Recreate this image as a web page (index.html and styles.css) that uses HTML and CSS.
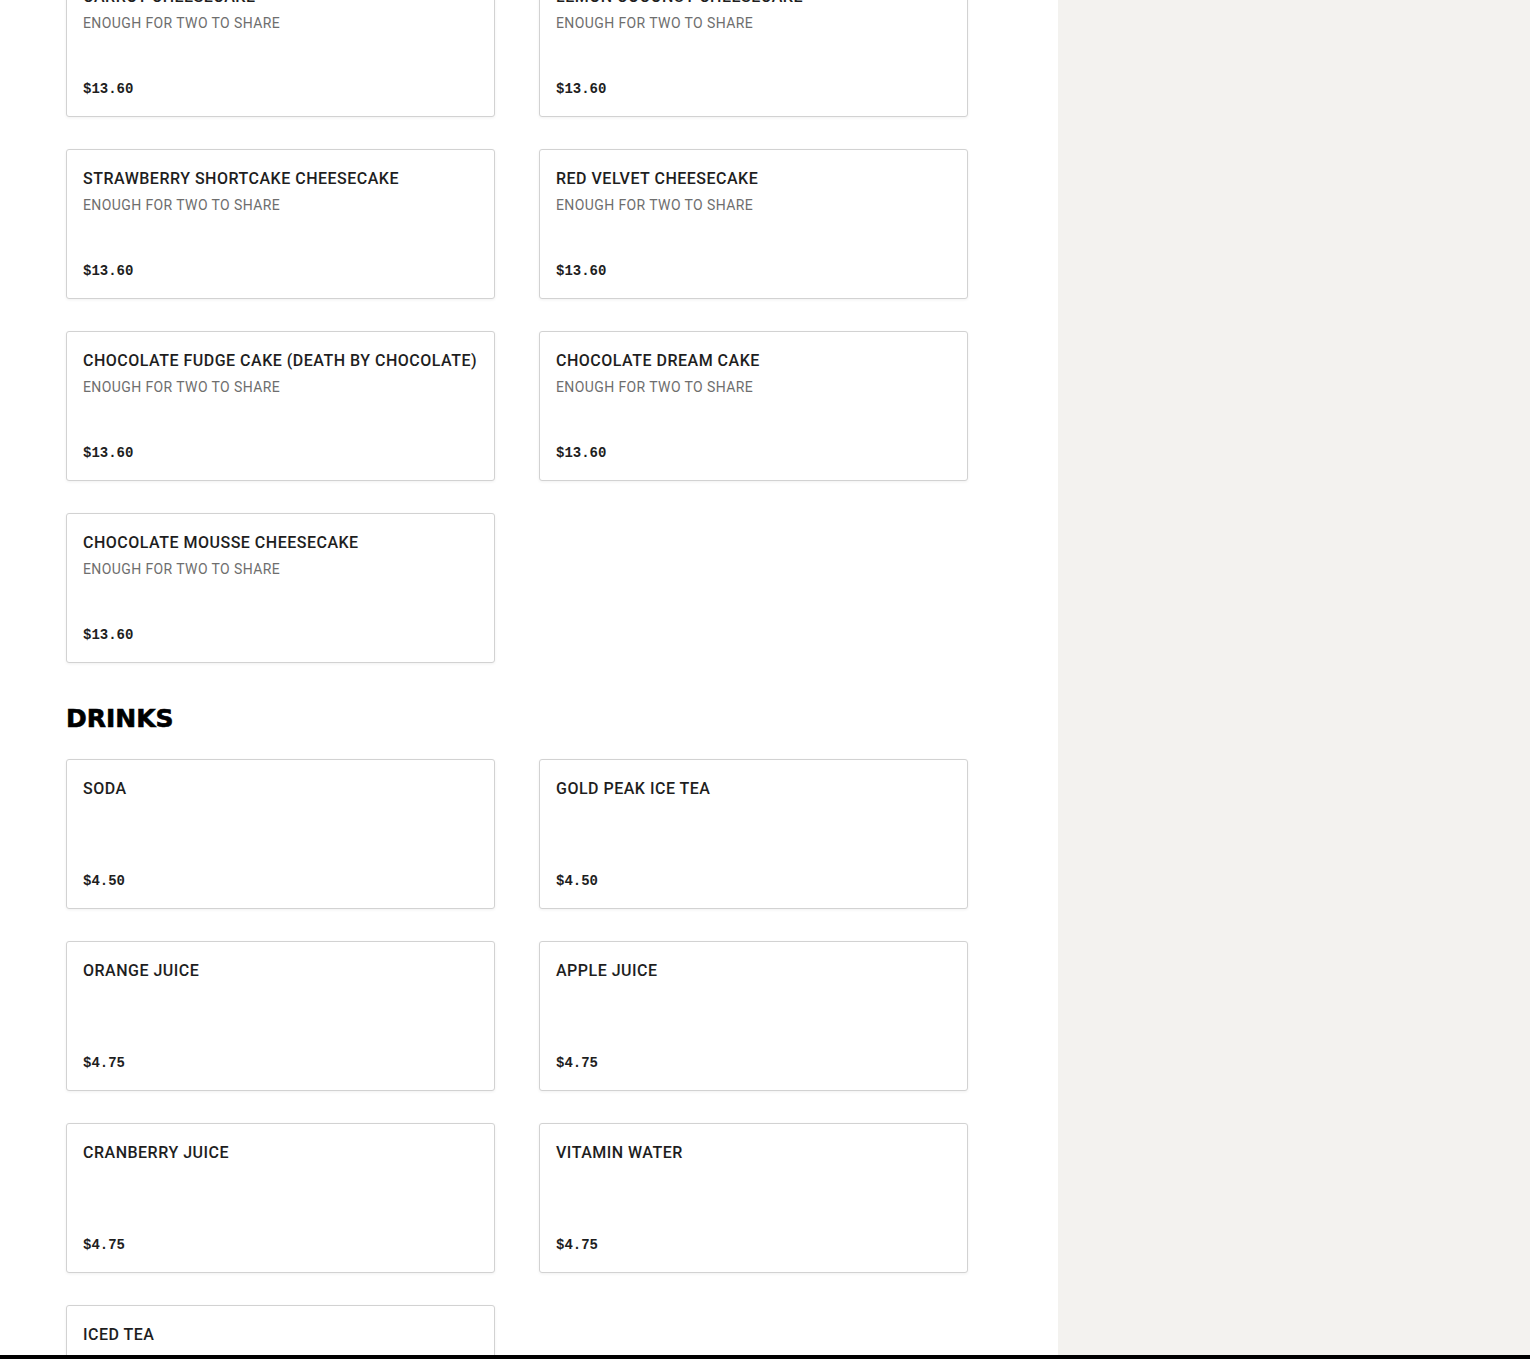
FILE: index.html
```html
<!DOCTYPE html>
<html lang="en">
<head>
<meta charset="utf-8">
<title>Menu</title>
<link rel="stylesheet" href="styles.css">
</head>
<body>
<div class="page">
  <main class="menu">
    <section class="section first">
      <div class="grid">
        <div class="card"><div class="name">CARROT CHEESECAKE</div><div class="desc">ENOUGH FOR TWO TO SHARE</div><div class="price">$13.60</div></div>
        <div class="card"><div class="name">LEMON COCONUT CHEESECAKE</div><div class="desc">ENOUGH FOR TWO TO SHARE</div><div class="price">$13.60</div></div>
        <div class="card"><div class="name">STRAWBERRY SHORTCAKE CHEESECAKE</div><div class="desc">ENOUGH FOR TWO TO SHARE</div><div class="price">$13.60</div></div>
        <div class="card"><div class="name">RED VELVET CHEESECAKE</div><div class="desc">ENOUGH FOR TWO TO SHARE</div><div class="price">$13.60</div></div>
        <div class="card"><div class="name">CHOCOLATE FUDGE CAKE (DEATH BY CHOCOLATE)</div><div class="desc">ENOUGH FOR TWO TO SHARE</div><div class="price">$13.60</div></div>
        <div class="card"><div class="name">CHOCOLATE DREAM CAKE</div><div class="desc">ENOUGH FOR TWO TO SHARE</div><div class="price">$13.60</div></div>
        <div class="card"><div class="name">CHOCOLATE MOUSSE CHEESECAKE</div><div class="desc">ENOUGH FOR TWO TO SHARE</div><div class="price">$13.60</div></div>
      </div>
    </section>
    <section class="section">
      <h2 class="heading">DRINKS</h2>
      <div class="grid">
        <div class="card"><div class="name">SODA</div><div class="price">$4.50</div></div>
        <div class="card"><div class="name">GOLD PEAK ICE TEA</div><div class="price">$4.50</div></div>
        <div class="card"><div class="name">ORANGE JUICE</div><div class="price">$4.75</div></div>
        <div class="card"><div class="name">APPLE JUICE</div><div class="price">$4.75</div></div>
        <div class="card"><div class="name">CRANBERRY JUICE</div><div class="price">$4.75</div></div>
        <div class="card"><div class="name">VITAMIN WATER</div><div class="price">$4.75</div></div>
        <div class="card"><div class="name">ICED TEA</div><div class="price">$4.75</div></div>
      </div>
    </section>
  </main>
  <aside class="side"></aside>
</div>
<div class="bottom-bar"></div>
</body>
</html>
```
FILE: styles.css
```css
html, body {
  margin: 0;
  padding: 0;
  height: 100%;
  overflow: hidden;
}
body {
  font-family: Roboto, "Liberation Sans", Arial, sans-serif;
  color: #1f1f1f;
  background: #fff;
}
.page {
  display: flex;
  min-height: 1359px;
}
.menu {
  width: 1058px;
  flex: none;
  box-sizing: border-box;
  padding-left: 66px;
  background: #fff;
}
.side {
  flex: 1;
  background: #f3f2ef;
}
.section.first {
  margin-top: -33px;
}
.grid {
  display: grid;
  grid-template-columns: 429px 429px;
  column-gap: 44px;
  row-gap: 32px;
}
.card {
  box-sizing: border-box;
  height: 150px;
  border: 1px solid #d2d2d2;
  border-radius: 3px;
  box-shadow: 0 1px 3px rgba(0,0,0,0.06);
  padding: 17px 8px 17px 16px;
  display: flex;
  flex-direction: column;
  background: #fff;
}
.name {
  font-size: 16px;
  line-height: 24px;
  font-weight: 500;
  color: #1e1e1e;
  letter-spacing: 0.5px;
  white-space: nowrap;
}
.desc {
  margin-top: 4px;
  font-size: 14px;
  line-height: 20px;
  color: #6e6e6e;
  letter-spacing: 0.4px;
}
.price {
  margin-top: auto;
  font-family: "Liberation Mono", "DejaVu Sans Mono", monospace;
  font-weight: bold;
  font-size: 14px;
  line-height: 20px;
  color: #1e1e1e;
}
.heading {
  margin: 38px 0 22px;
  font-family: "DejaVu Sans", sans-serif;
  font-weight: 900;
  font-size: 25px;
  line-height: 36px;
  color: #000;
  -webkit-text-stroke: 0.6px #000;
}
.bottom-bar {
  position: fixed;
  left: 0;
  right: 0;
  bottom: 0;
  height: 4px;
  background: #000;
}
```
